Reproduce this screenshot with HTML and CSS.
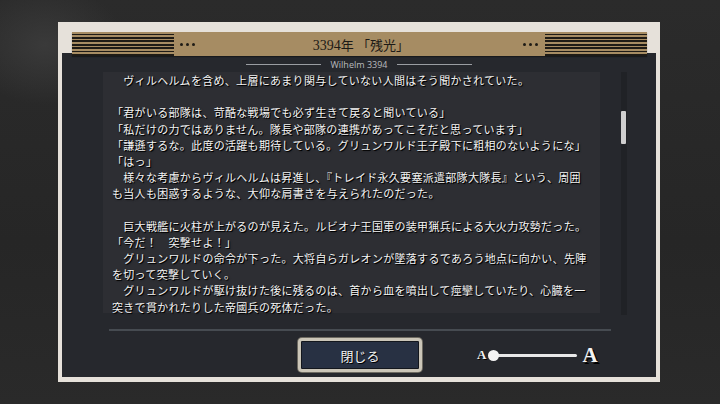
FILE: index.html
```html
<!DOCTYPE html>
<html lang="ja">
<head>
<meta charset="utf-8">
<link rel="stylesheet" href="styles.css">
</head>
<body>
<div class="frame">
  <div class="header">
    <div class="stripes"></div>
    <div class="dots dots-left"><i></i><i></i><i></i></div>
    <div class="title"><span class="num">3394</span>年 「残光」</div>
    <div class="dots dots-right"><i></i><i></i><i></i></div>
    <div class="stripes"></div>
  </div>
  <div class="panel">
    <div class="subtitle">
      <span class="rule"></span>
      <span class="sub-text">Wilhelm 3394</span>
      <span class="rule"></span>
    </div>
    <div class="body-row">
      <div class="textbox">
        <p class="line">　ヴィルヘルムを含め、上層にあまり関与していない人間はそう聞かされていた。</p>
        <p class="line">&nbsp;</p>
        <p class="line">「君がいる部隊は、苛酷な戦場でも必ず生きて戻ると聞いている」</p>
        <p class="line">「私だけの力ではありません。隊長や部隊の連携があってこそだと思っています」</p>
        <p class="line">「謙遜するな。此度の活躍も期待している。グリュンワルド王子殿下に粗相のないようにな」</p>
        <p class="line">「はっ」</p>
        <p class="line">　様々な考慮からヴィルヘルムは昇進し、『トレイド永久要塞派遣部隊大隊長』という、周囲</p>
        <p class="line">も当人も困惑するような、大仰な肩書きを与えられたのだった。</p>
        <p class="line">&nbsp;</p>
        <p class="line">　巨大戦艦に火柱が上がるのが見えた。ルビオナ王国軍の装甲猟兵による大火力攻勢だった。</p>
        <p class="line">「今だ！　突撃せよ！」</p>
        <p class="line">　グリュンワルドの命令が下った。大将自らガレオンが墜落するであろう地点に向かい、先陣</p>
        <p class="line">を切って突撃していく。</p>
        <p class="line">　グリュンワルドが駆け抜けた後に残るのは、首から血を噴出して痙攣していたり、心臓を一</p>
        <p class="line">突きで貫かれたりした帝國兵の死体だった。</p>
      </div>
      <div class="scroll"><div class="thumb"></div></div>
    </div>
    <div class="divider"></div>
    <div class="controls">
      <button class="close-btn">閉じる</button>
      <div class="slider">
        <span class="a-small">A</span>
        <span class="track"><span class="knob"></span></span>
        <span class="a-big">A</span>
      </div>
    </div>
  </div>
</div>
</body>
</html>
```
FILE: styles.css
```css
* { box-sizing: border-box; }
html, body { margin: 0; padding: 0; }
body {
  width: 720px;
  height: 404px;
  overflow: hidden;
  background: radial-gradient(ellipse 80px 60px at 45px 45px, #3a3a3a 0%, rgba(58,58,58,0) 100%),
              linear-gradient(180deg, #2b2b2b 0%, #262626 60%, #2a2a2a 100%);
  font-family: "Noto Sans CJK JP", sans-serif;
  padding-top: 22px;
}
.frame {
  margin-left: 58px;
  width: 602px;
  height: 360px;
  background: #e6e1da;
  padding: 10px 4px 5px 4px;
  display: flex;
  flex-direction: column;
}
.header {
  position: relative;
  z-index: 1;
  margin: 0 9px -3px 10px;
  height: 24px;
  background: #a68c63;
  display: flex;
  align-items: center;
  box-shadow: 0 1px 1px rgba(0,0,0,0.35);
}
.stripes {
  width: 102px;
  height: 24px;
  background: repeating-linear-gradient(180deg, #a68c63 0px, #a68c63 1.6px, #1e1b16 1.6px, #1e1b16 3.4px);
}
.dots {
  display: flex;
  gap: 3px;
}
.dots i {
  display: block;
  width: 3px;
  height: 3px;
  border-radius: 50%;
  background: #1e1b16;
}
.dots-left { margin: 0 0 0 6px; }
.dots-right { margin: 0 7px 0 0; }
.title {
  flex: 1;
  text-align: center;
  font-size: 13px;
  color: #1c1a17;
  font-family: "Liberation Serif", "Noto Sans CJK JP", serif;
  padding-left: 4px;
}
.title .num { font-size: 14px; }
.panel {
  flex: 1;
  background: #26282d;
  display: flex;
  flex-direction: column;
}
.subtitle {
  height: 19px;
  padding-top: 3px;
  display: flex;
  align-items: center;
  justify-content: center;
  gap: 10px;
}
.rule {
  width: 75px;
  height: 1px;
  background: #9a9da2;
}
.sub-text {
  font-family: "Open Sans", "DejaVu Sans", sans-serif;
  font-size: 9px;
  color: #b9bbbe;
}
.body-row {
  height: 243px;
  display: flex;
  padding-left: 41px;
}
.textbox {
  width: 497px;
  height: 241px;
  background: #2d2e33;
  padding-left: 9px;
}
.line {
  margin: 0;
  height: 16.2px;
  line-height: 16.2px;
  font-size: 11px;
  letter-spacing: 0.3px;
  color: #f4f4f4;
  white-space: nowrap;
  text-shadow: 1px 1px 0 #000, 1px 1px 2px rgba(0,0,0,0.6);
}
.scroll {
  margin-left: 21px;
  width: 6px;
  height: 243px;
  background: #202226;
  padding-top: 39px;
}
.thumb {
  width: 5px;
  height: 33px;
  background: #cfcfcf;
  border-radius: 1px;
}
.divider {
  margin: 14px 0 0 47px;
  width: 502px;
  height: 2px;
  background: #464b51;
}
.controls {
  display: flex;
  align-items: center;
  margin-top: 7px;
  padding-left: 236px;
}
.close-btn {
  width: 124px;
  height: 34px;
  background: #283143;
  border: 3px solid #cbc6b8;
  border-radius: 4px;
  box-shadow: 0 0 0 1px #6d6a61, inset 0 0 0 1px #14171d;
  color: #f2f2f2;
  font-family: "Noto Sans CJK JP", sans-serif;
  font-size: 13px;
  padding: 0;
  text-shadow: 1px 1px 0 #000;
}
.slider {
  display: flex;
  align-items: center;
  margin-left: 55px;
}
.a-small {
  font-family: "Liberation Serif", serif;
  font-weight: bold;
  font-size: 13px;
  color: #f2f2f2;
  text-shadow: 1px 1px 0 #000;
  margin-right: 7px;
}
.track {
  position: relative;
  width: 84px;
  height: 3px;
  background: #e8e8e8;
  border-radius: 2px;
  display: block;
}
.knob {
  position: absolute;
  left: -5px;
  top: -4px;
  width: 11px;
  height: 11px;
  border-radius: 50%;
  background: #f4f4f4;
}
.a-big {
  font-family: "Liberation Serif", serif;
  font-weight: bold;
  font-size: 21px;
  color: #f4f4f4;
  text-shadow: 2px 2px 0 #000;
  margin-left: 5px;
  line-height: 20px;
}
```
